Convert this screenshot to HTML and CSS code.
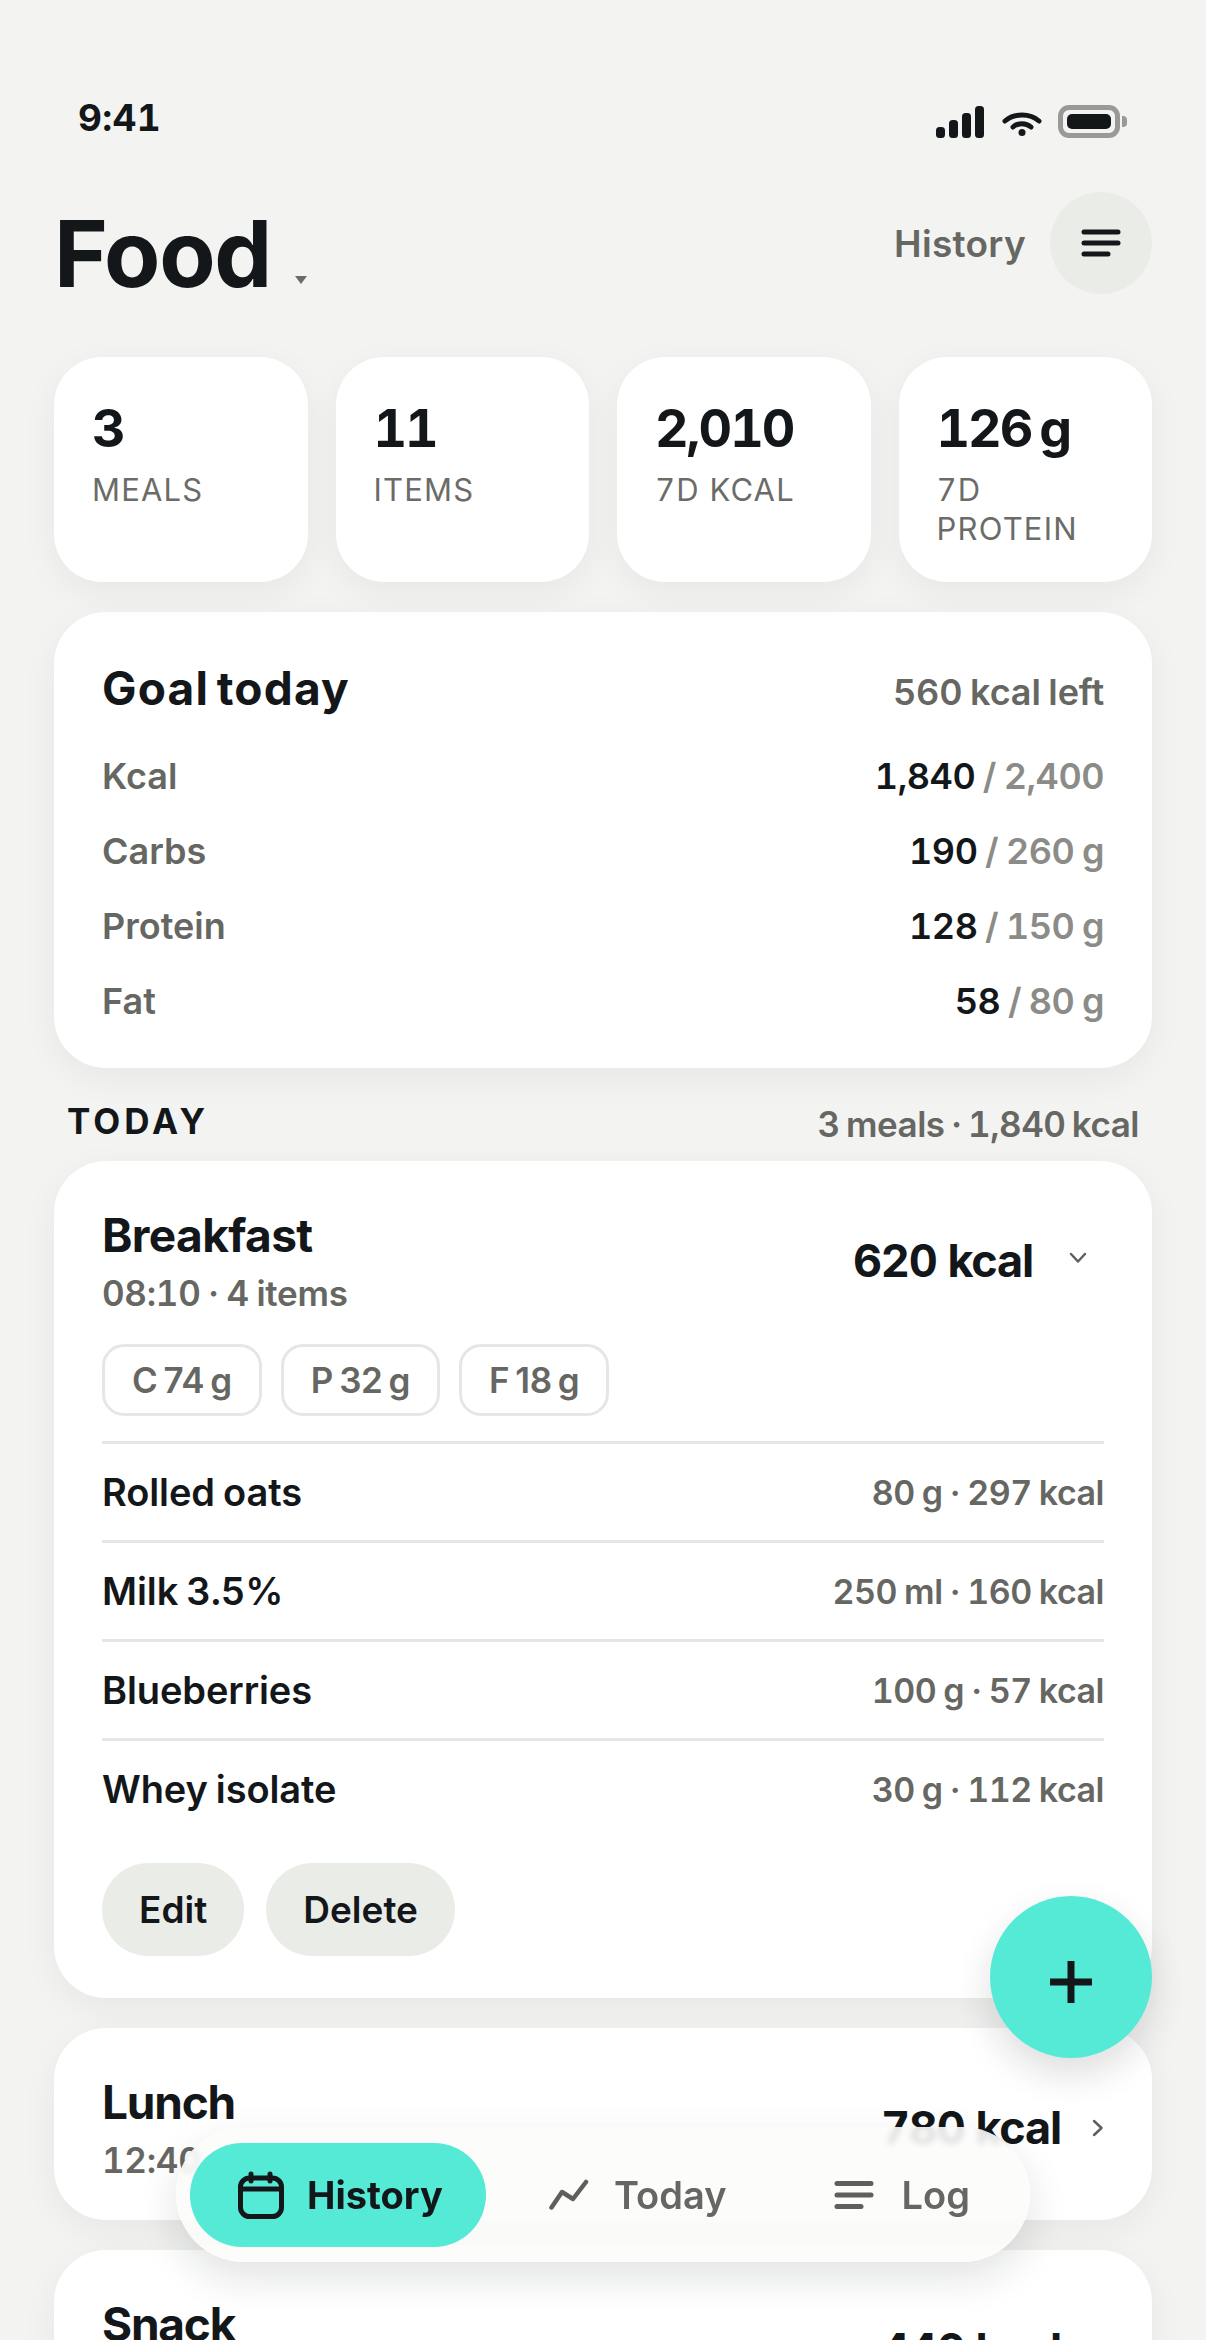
FILE: index.html
```html
<!DOCTYPE html>
<html lang="en">

<head>
    <meta charset="UTF-8">
    <meta name="viewport" content="width=device-width, initial-scale=1.0">
    <title>Food</title>
    <link rel="stylesheet" href="styles.css">
</head>

<body>
    <div class="screen">
        <!-- status bar -->
        <div class="statusBar">
            <div class="clock">9:41</div>
            <div class="statusIcons">
                <svg class="signal" width="48" height="32" viewBox="0 0 48 32" fill="#14171a">
                    <rect x="0" y="21" width="9" height="11" rx="3.5"></rect>
                    <rect x="13" y="14" width="9" height="18" rx="3.5"></rect>
                    <rect x="26" y="7" width="9" height="25" rx="3.5"></rect>
                    <rect x="39" y="0" width="9" height="32" rx="3.5"></rect>
                </svg>
                <svg class="wifi" width="40" height="24" viewBox="0 0 40 24" fill="none" stroke="#14171a" stroke-width="5" stroke-linecap="round">
                    <path d="M3 9C12 1 28 1 37 9"></path>
                    <path d="M11 15C16 10.500 24 10.500 29 15"></path>
                    <circle cx="20" cy="20.500" r="3.500" fill="#14171a" stroke="none"></circle>
                </svg>
                <div class="battery">
                    <div class="batteryFill"></div>
                </div>
                <div class="batteryNub"></div>
            </div>
        </div>

        <!-- title -->
        <div class="header">
            <div class="titleWrap">
                <h1 class="title">Food</h1>
                <span class="caret"></span>
            </div>
            <div class="headerRight">
                <span class="historyLink">History</span>
                <div class="menuBtn">
                    <svg width="40" height="34" viewBox="0 0 40 34" fill="none" stroke="#14171a" stroke-width="5" stroke-linecap="round">
                        <path d="M3 6H37"></path>
                        <path d="M3 17H37"></path>
                        <path d="M3 28H27"></path>
                    </svg>
                </div>
            </div>
        </div>

        <!-- stats -->
        <div class="stats">
            <div class="statCard">
                <div class="statNum">3</div>
                <div class="statLabel">MEALS</div>
            </div>
            <div class="statCard">
                <div class="statNum">11</div>
                <div class="statLabel">ITEMS</div>
            </div>
            <div class="statCard">
                <div class="statNum">2,010</div>
                <div class="statLabel">7D KCAL</div>
            </div>
            <div class="statCard">
                <div class="statNum">126 g</div>
                <div class="statLabel">7D PROTEIN</div>
            </div>
        </div>

        <!-- goal -->
        <div class="card goalCard">
            <div class="goalHead">
                <div class="cardTitle">Goal today</div>
                <div class="goalLeft">560 kcal left</div>
            </div>
            <div class="goalRow">
                <span class="goalName">Kcal</span>
                <span class="goalVal"><b>1,840</b> / 2,400</span>
            </div>
            <div class="goalRow">
                <span class="goalName">Carbs</span>
                <span class="goalVal"><b>190</b> / 260 g</span>
            </div>
            <div class="goalRow">
                <span class="goalName">Protein</span>
                <span class="goalVal"><b>128</b> / 150 g</span>
            </div>
            <div class="goalRow">
                <span class="goalName">Fat</span>
                <span class="goalVal"><b>58</b> / 80 g</span>
            </div>
        </div>

        <!-- today -->
        <div class="sectionHead">
            <div class="sectionTitle">TODAY</div>
            <div class="sectionInfo">3 meals · 1,840 kcal</div>
        </div>

        <div class="card mealCard">
            <div class="mealHead">
                <div>
                    <div class="cardTitle">Breakfast</div>
                    <div class="mealSub">08:10 · 4 items</div>
                </div>
                <div class="mealRight">
                    <span class="mealKcal">620 kcal</span>
                    <svg class="chevDown" width="18" height="12" viewBox="0 0 18 12" fill="none" stroke="#5f605c" stroke-width="2.500" stroke-linecap="round" stroke-linejoin="round">
                        <path d="M2 2L9 9.500L16 2"></path>
                    </svg>
                </div>
            </div>
            <div class="chips">
                <span class="chip">C 74 g</span>
                <span class="chip">P 32 g</span>
                <span class="chip">F 18 g</span>
            </div>
            <div class="foodRow">
                <span class="foodName">Rolled oats</span>
                <span class="foodInfo">80 g · 297 kcal</span>
            </div>
            <div class="foodRow">
                <span class="foodName">Milk 3.5%</span>
                <span class="foodInfo">250 ml · 160 kcal</span>
            </div>
            <div class="foodRow">
                <span class="foodName">Blueberries</span>
                <span class="foodInfo">100 g · 57 kcal</span>
            </div>
            <div class="foodRow">
                <span class="foodName">Whey isolate</span>
                <span class="foodInfo">30 g · 112 kcal</span>
            </div>
            <div class="actions">
                <span class="actionBtn">Edit</span>
                <span class="actionBtn">Delete</span>
            </div>
        </div>

        <div class="card mealCard closedCard">
            <div class="mealHead">
                <div>
                    <div class="cardTitle">Lunch</div>
                    <div class="mealSub">12:40 · 5 items</div>
                </div>
                <div class="mealRight">
                    <span class="mealKcal">780 kcal</span>
                    <svg class="chevRight" width="12" height="18" viewBox="0 0 12 18" fill="none" stroke="#5f605c" stroke-width="2.500" stroke-linecap="round" stroke-linejoin="round">
                        <path d="M2 2L9.500 9L2 16"></path>
                    </svg>
                </div>
            </div>
        </div>

        <div class="card mealCard closedCard">
            <div class="mealHead">
                <div>
                    <div class="cardTitle">Snack</div>
                    <div class="mealSub">16:20 · 2 items</div>
                </div>
                <div class="mealRight">
                    <span class="mealKcal">440 kcal</span>
                    <svg class="chevRight" width="12" height="18" viewBox="0 0 12 18" fill="none" stroke="#5f605c" stroke-width="2.500" stroke-linecap="round" stroke-linejoin="round">
                        <path d="M2 2L9.500 9L2 16"></path>
                    </svg>
                </div>
            </div>
        </div>

        <!-- floating add button -->
        <div class="fab">
            <svg width="42" height="42" viewBox="0 0 42 42" fill="none" stroke="#14171a" stroke-width="7">
                <path d="M21 0V42"></path>
                <path d="M0 21H42"></path>
            </svg>
        </div>

        <!-- floating nav -->
        <div class="nav">
            <div class="navItem navActive">
                <svg width="48" height="48" viewBox="0 0 48 48" fill="none" stroke="#14171a" stroke-width="5" stroke-linecap="round" stroke-linejoin="round">
                    <rect x="3.500" y="7" width="41" height="38.500" rx="9"></rect>
                    <path d="M3.500 18H44.500"></path>
                    <path d="M14 3V10"></path>
                    <path d="M33 3V10"></path>
                </svg>
                <span>History</span>
            </div>
            <div class="navItem navToday">
                <svg width="40" height="32" viewBox="0 0 40 32" fill="none" stroke="#5f605c" stroke-width="4.500" stroke-linecap="round" stroke-linejoin="round">
                    <path d="M2.500 28.500L13 13L24 20L37 3"></path>
                </svg>
                <span>Today</span>
            </div>
            <div class="navItem navLog">
                <svg width="40" height="32" viewBox="0 0 40 32" fill="none" stroke="#5f605c" stroke-width="5" stroke-linecap="round">
                    <path d="M3 4.500H37"></path>
                    <path d="M3 16H37"></path>
                    <path d="M3 27.500H27"></path>
                </svg>
                <span>Log</span>
            </div>
        </div>
    </div>
</body>

</html>
```

FILE: styles.css
```css
* {
    margin: 0;
    padding: 0;
    box-sizing: border-box;
}

html,
body {
    width: 1206px;
    height: 2340px;
    overflow: hidden;
}

body {
    background: #f3f4f2;
    color: #14171a;
    font-family: "Inter", "Noto Sans", sans-serif;
    font-variant-numeric: tabular-nums;
}

.screen {
    position: relative;
    width: 1206px;
    height: 2340px;
    padding: 96px 54px 0;
    overflow: hidden;
}

.statusBar {
    display: flex;
    justify-content: space-between;
    align-items: center;
    height: 42px;
    padding: 0 25px 0 24px;
}

.clock {
    font-size: 37px;
    font-weight: 700;
    letter-spacing: 0.300px;
}

.statusIcons {
    display: flex;
    align-items: center;
}

.signal {
    margin-top: 10px;
}

.wifi {
    margin: 14px 16px 0 18px;
}

.battery {
    width: 62px;
    height: 33px;
    margin-top: 8px;
    padding: 5px;
    border: 5px solid #999a97;
    border-radius: 11px;
}

.batteryFill {
    height: calc(100% + 2px);
    margin: -1px;
    background: #14171a;
    border-radius: 5px;
}

.batteryNub {
    width: 5px;
    height: 11px;
    margin: 8px 0 0 2px;
    background: #999a97;
    border-radius: 0 4px 4px 0;
}

.header {
    display: flex;
    justify-content: space-between;
    align-items: center;
    margin-top: 54px;
    height: 102px;
}

.titleWrap {
    display: flex;
    align-items: flex-end;
}

.title {
    font-size: 92px;
    line-height: 102px;
    font-weight: 700;
    letter-spacing: -1.300px;
    margin-top: 22px;
}

.caret {
    width: 0;
    height: 0;
    margin: 0 0 21px 24px;
    border-left: 6px solid transparent;
    border-right: 6px solid transparent;
    border-top: 8px solid #6b6c68;
}

.headerRight {
    display: flex;
    align-items: center;
    gap: 24px;
}

.historyLink {
    font-size: 37px;
    font-weight: 600;
    letter-spacing: 0.300px;
    color: #666763;
}

.menuBtn {
    display: flex;
    align-items: center;
    justify-content: center;
    width: 102px;
    height: 102px;
    background: #eaece8;
    border-radius: 50%;
}

.stats {
    display: grid;
    grid-template-columns: repeat(4, 1fr);
    gap: 28px;
    margin-top: 63px;
}

.statCard {
    height: 225px;
    padding: 42px 40px 0 38px;
    background: #fff;
    border-radius: 48px;
    box-shadow: 0 10px 36px rgba(20, 23, 26, 0.05);
}

.statNum {
    font-size: 52px;
    line-height: 60px;
    font-weight: 700;
    letter-spacing: -2px;
    word-spacing: -4px;
}

.statLabel {
    margin-top: 11px;
    font-size: 31px;
    line-height: 39px;
    letter-spacing: 1.200px;
    color: #6b6c68;
}

.card {
    background: #fff;
    border-radius: 52px;
    box-shadow: 0 10px 36px rgba(20, 23, 26, 0.05);
}

.goalCard {
    height: 456px;
    margin-top: 30px;
    padding: 48px 48px 0;
}

.goalHead {
    display: flex;
    justify-content: space-between;
    align-items: baseline;
    height: 56px;
    margin-bottom: 22px;
}

.cardTitle {
    font-size: 46px;
    line-height: 56px;
    font-weight: 700;
    letter-spacing: -0.600px;
}

.goalHead .cardTitle {
    letter-spacing: 1.200px;
    word-spacing: -6px;
}

.closedCard .cardTitle {
    letter-spacing: -1.200px;
}

.goalLeft {
    font-size: 36px;
    font-weight: 600;
    letter-spacing: -0.100px;
    word-spacing: -2px;
    color: #666763;
}

.goalRow {
    display: flex;
    justify-content: space-between;
    align-items: center;
    height: 75px;
    font-size: 36px;
}

.goalName {
    font-weight: 600;
    color: #666763;
}

.goalVal {
    font-weight: 600;
    letter-spacing: -0.500px;
    word-spacing: -1.500px;
    color: #8b8c88;
}

.goalVal b {
    font-weight: 600;
    color: #14171a;
}

.sectionHead {
    display: flex;
    justify-content: space-between;
    align-items: center;
    height: 44px;
    margin-top: 31px;
    padding: 0 13px;
}

.sectionTitle {
    font-size: 35px;
    font-weight: 700;
    letter-spacing: 4px;
}

.sectionInfo {
    padding-top: 5px;
    font-size: 35px;
    font-weight: 600;
    letter-spacing: -0.500px;
    word-spacing: -2.500px;
    color: #666763;
}

.mealCard {
    margin-top: 30px;
    padding: 46px 48px 42px;
}

.sectionHead + .mealCard {
    margin-top: 18px;
}

.mealHead {
    display: flex;
    justify-content: space-between;
    align-items: center;
}

.mealSub {
    margin-top: 7px;
    font-size: 35px;
    line-height: 46px;
    font-weight: 600;
    letter-spacing: -0.300px;
    word-spacing: -1.500px;
    color: #666763;
}

.mealRight {
    display: flex;
    align-items: center;
    margin-top: -2px;
}

.mealKcal {
    font-size: 45px;
    font-weight: 700;
    letter-spacing: -1.200px;
}

.chevDown {
    margin: 0 17px 0 36px;
    position: relative;
    top: -3px;
}

.chevRight {
    margin: 0 0 0 31px;
}

.closedCard {
    height: 192px;
    padding-top: 46px;
}

.chips {
    display: flex;
    gap: 19px;
    margin-top: 28px;
    padding-bottom: 25px;
}

.chip {
    display: flex;
    align-items: center;
    height: 72px;
    padding: 0 27px;
    border: 3px solid #e6e7e3;
    border-radius: 22px;
    font-size: 35px;
    font-weight: 600;
    font-variant-numeric: normal;
    letter-spacing: -0.500px;
    word-spacing: -2px;
    color: #666763;
}

.foodRow {
    display: flex;
    justify-content: space-between;
    align-items: center;
    height: 99px;
    border-top: 3px solid #e6e7e3;
}

.foodName {
    font-size: 38px;
    font-weight: 600;
    letter-spacing: -0.100px;
    word-spacing: -2px;
}

.foodInfo {
    font-size: 34px;
    font-weight: 600;
    letter-spacing: -0.500px;
    word-spacing: -1.500px;
    color: #666763;
}

.actions {
    display: flex;
    gap: 22px;
    margin-top: 26px;
}

.actionBtn {
    display: flex;
    align-items: center;
    height: 93px;
    padding: 0 37px;
    background: #eaece8;
    border-radius: 47px;
    font-size: 37px;
    font-weight: 600;
}

.fab {
    position: absolute;
    left: 990px;
    top: 1896px;
    display: flex;
    align-items: center;
    justify-content: center;
    width: 162px;
    height: 162px;
    background: #55ead6;
    border-radius: 50%;
    box-shadow: 0 16px 36px rgba(20, 23, 26, 0.14);
}

.fab svg {
    margin-top: 10px;
}

.nav {
    position: absolute;
    left: 176px;
    top: 2127px;
    display: flex;
    align-items: center;
    width: 854px;
    height: 135px;
    padding: 0 14px;
    background: rgba(252, 252, 251, 0.88);
    backdrop-filter: blur(3px);
    border-radius: 68px;
    box-shadow: 0 16px 40px rgba(20, 23, 26, 0.12);
}

.navItem {
    display: flex;
    align-items: center;
    font-size: 38px;
    font-weight: 600;
    color: #666763;
}

.navActive {
    width: 296px;
    height: 104px;
    padding-left: 47px;
    gap: 22px;
    background: #55ead6;
    border-radius: 52px;
    color: #14171a;
    font-weight: 700;
}

.navToday {
    margin-left: 63px;
    gap: 25px;
}

.navLog {
    margin-left: 107px;
    gap: 28px;
}
```
